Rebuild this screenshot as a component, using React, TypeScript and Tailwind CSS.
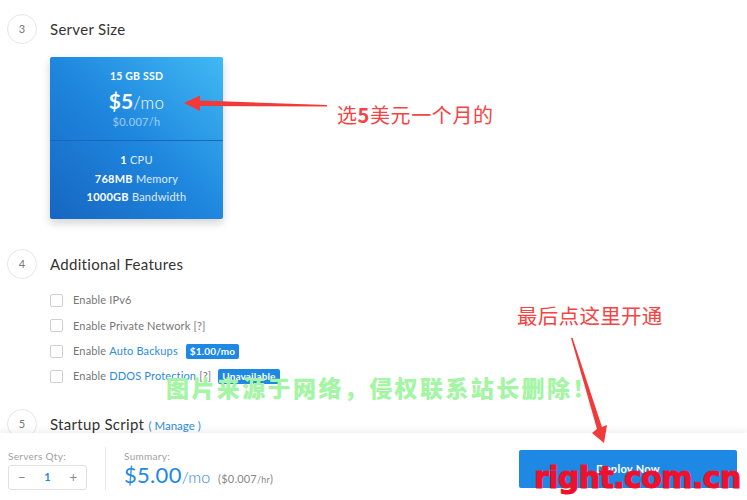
import React from "react";

function Step({ n, children }: { n: number; children: React.ReactNode }) {
  return (
    <div className="flex items-center gap-[13px]">
      <div className="flex h-[30px] w-[30px] items-center justify-center rounded-full border border-[#e6e6e6] text-[11px] text-[#777]">
        {n}
      </div>
      <div className="text-[15px] leading-none tracking-[0.3px] text-[#333]">{children}</div>
    </div>
  );
}

function Feature({ children }: { children: React.ReactNode }) {
  return (
    <div className="flex h-[25.3px] items-center">
      <span className="h-[13px] w-[13px] rounded-[2px] border border-[#cfcfcf] bg-white" />
      <span className="ml-[10px] flex items-center text-[11px] tracking-[0.15px] text-[#777]">{children}</span>
    </div>
  );
}

export default function App() {
  return (
    <div className="relative h-[500px] w-full overflow-hidden bg-white font-['Lato','Noto_Sans',sans-serif]">
      <div className="pl-[7px] pt-[14px]">
        <Step n={3}>Server Size</Step>

        <div className="ml-[43px] mt-[13px] h-[162px] w-[173px] rounded-[2px] bg-linear-to-bl from-[#41b9f4] via-[#1f87de] to-[#1766c1] text-white shadow-[0_4px_10px_rgba(0,0,0,0.18)]">
          <div className="flex h-[84px] flex-col items-center border-b border-[#1967bd] pt-[12px]">
            <div className="text-[10.5px] font-bold leading-[14px] tracking-[0.2px]">15 GB SSD</div>
            <div className="mt-[6px] leading-[24px]">
              <span className="text-[21px] font-bold">$5</span>
              <span className="text-[17px] font-light tracking-[0.3px]">/mo</span>
            </div>
            <div className="text-[11px] leading-[14px] tracking-[0.3px] text-white/55">$0.007/h</div>
          </div>
          <div className="flex flex-col items-center pt-[10px] text-[11px] leading-[18.5px] tracking-[0.25px] text-white/85">
            <div>
              <b className="text-white">1</b> CPU
            </div>
            <div>
              <b className="text-white">768MB</b> Memory
            </div>
            <div>
              <b className="text-white">1000GB</b> Bandwidth
            </div>
          </div>
        </div>

        <div className="mt-[30px]">
          <Step n={4}>Additional Features</Step>
        </div>

        <div className="ml-[43px] mt-[9px]">
          <Feature>Enable IPv6</Feature>
          <Feature>Enable Private Network [?]</Feature>
          <Feature>
            Enable&nbsp;<span className="text-[#2b8be0]">Auto Backups</span>
            <span className="ml-[8px] rounded-[2px] bg-[#1e88e5] px-[4px] text-[10px] font-bold leading-[15px] text-white">
              $1.00/mo
            </span>
          </Feature>
          <Feature>
            Enable&nbsp;<span className="text-[#2b8be0]">DDOS Protection</span>&nbsp;[?]
            <span className="ml-[7px] rounded-[2px] bg-[#1e88e5] px-[4px] text-[10px] font-bold leading-[15px] text-white">
              Unavailable
            </span>
          </Feature>
        </div>

        <div className="mt-[20px]">
          <Step n={5}>
            Startup Script{" "}
            <span className="text-[11.5px] tracking-normal text-[#2b8be0]">( Manage )</span>
          </Step>
        </div>
      </div>

      <div className="absolute bottom-0 left-0 right-0 flex h-[67px] bg-white shadow-[0_-3px_6px_rgba(0,0,0,0.06)]">
        <div className="pl-[8px] pt-[16px]">
          <div className="text-[10px] leading-[14px] tracking-[0.3px] text-[#a0a0a0]">Servers Qty:</div>
          <div className="mt-[2px] flex h-[25px] w-[79px] items-center justify-between rounded-[3px] border border-[#e0e0e0] px-[9px] text-[13px]">
            <span className="text-[#888]">−</span>
            <span className="text-[11px] font-bold text-[#1e88e5]">1</span>
            <span className="text-[#888]">+</span>
          </div>
        </div>
        <div className="ml-[18px] mt-[14px] h-[43px] w-px bg-[#e8e8e8]" />
        <div className="ml-[18px] pt-[16px]">
          <div className="text-[10px] leading-[14px] tracking-[0.3px] text-[#a0a0a0]">Summary:</div>
          <div className="flex items-baseline leading-[24px]">
            <span className="text-[22px] tracking-[0.3px] text-[#1e88e5]">$5.00</span>
            <span className="text-[16px] font-light text-[#1e88e5]">/mo</span>
            <span className="ml-[8px] text-[11px] tracking-[0.2px] text-[#888]">
              ($0.007<span className="text-[9px]">/hr</span>)
            </span>
          </div>
        </div>
        <button className="ml-auto mr-[10px] mt-[17px] h-[38px] w-[218px] rounded-[2px] bg-[#1e88e5] text-[11px] font-bold tracking-[0.3px] text-white">
          Deploy Now
        </button>
      </div>

      <svg className="pointer-events-none absolute left-0 top-0 h-[500px] w-[747px]" viewBox="0 0 747 500">
        <polygon points="327,105 327,106.5 200,106 200,111 184,103 200,95.5 200,100.5" fill="#f23a3a" />
        <polygon points="571,338 572.5,337.8 602,427 607,425 604,443 592,433 597,429" fill="#f23a3a" />
      </svg>

      <div className="pointer-events-none absolute left-[337px] top-[102px] font-['Noto_Sans_CJK_SC',sans-serif] text-[20px] leading-[26px] tracking-[0.6px] text-[#f54444]">
        选<b>5</b>美元一个月的
      </div>
      <div className="pointer-events-none absolute left-[517px] top-[302px] font-['Noto_Sans_CJK_SC',sans-serif] text-[20.5px] leading-[26px] tracking-[0.3px] text-[#f54444]">
        最后点这里开通
      </div>
      <div className="pointer-events-none absolute left-[166px] top-[373px] font-['Noto_Sans_CJK_SC',sans-serif] text-[23px] font-black leading-[28px] tracking-[2.4px] text-[#a4f5a4]">
        图片来源于网络，侵权联系站长删除！
      </div>
      <div className="pointer-events-none absolute left-[534px] top-[460px] font-['DejaVu_Sans',sans-serif] text-[30px] font-bold leading-[36px] tracking-[-0.6px] text-[#f0102c] [-webkit-text-stroke:1px_#f0102c]">
        right.com.cn
      </div>
    </div>
  );
}
